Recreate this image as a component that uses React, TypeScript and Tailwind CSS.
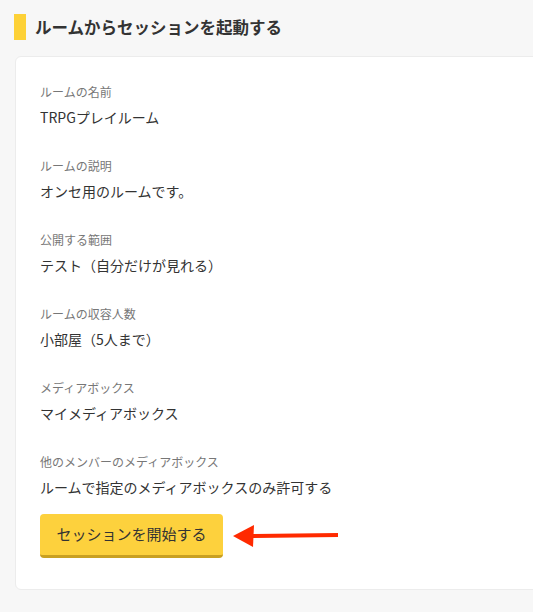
import React from "react";

const fields = [
  { label: "ルームの名前", value: "TRPGプレイルーム" },
  { label: "ルームの説明", value: "オンセ用のルームです。" },
  { label: "公開する範囲", value: "テスト（自分だけが見れる）" },
  { label: "ルームの収容人数", value: "小部屋（5人まで）" },
  { label: "メディアボックス", value: "マイメディアボックス" },
  { label: "他のメンバーのメディアボックス", value: "ルームで指定のメディアボックスのみ許可する" },
];

export default function App() {
  return (
    <main
      className="min-h-[612px] w-full overflow-hidden bg-[#f7f7f7] text-[#333]"
      style={{ fontFamily: '"Noto Sans CJK JP", "Noto Sans", sans-serif' }}
    >
      {/* header */}
      <div className="flex items-center gap-[9px] pl-[14px] pt-[14px]">
        <div className="h-[26px] w-[12px] bg-[#fdd137]" />
        <h1 className="text-[16.5px] font-bold leading-[26px] text-[#333]">
          ルームからセッションを起動する
        </h1>
      </div>

      {/* card */}
      <div className="ml-[15px] mr-[-20px] mt-[16px] rounded-[6px] border border-[#ececec] bg-white pb-[31px] pl-[24px] pt-[26px]">
        <div className="flex flex-col gap-[29px]">
          {fields.map((f) => (
            <div key={f.label} className="flex flex-col gap-[5px]">
              <p className="text-[12px] leading-[18px] text-[#777]">{f.label}</p>
              <p className="text-[14px] leading-[22px] text-[#333]">{f.value}</p>
            </div>
          ))}
        </div>

        <div className="mt-[16px] flex items-center gap-[9px]">
          <button
            type="button"
            className="h-[44px] w-[183px] rounded-[4px] border-b-[3px] border-[#c9a021] bg-[#fdd13d] text-[15px] text-[#333]"
          >
            セッションを開始する
          </button>
          <svg width="108" height="24" viewBox="0 0 108 24">
            <line x1="18" y1="12" x2="106" y2="11" stroke="#ff2a00" strokeWidth="4" />
            <polygon points="1,12 22,1 21,23" fill="#ff2a00" />
          </svg>
        </div>
      </div>
    </main>
  );
}
